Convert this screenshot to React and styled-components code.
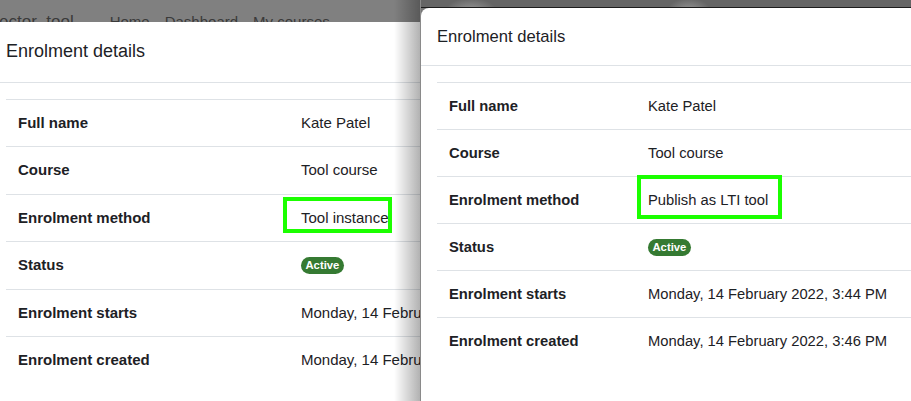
import React from "react";
import styled, { createGlobalStyle } from "styled-components";

const Global = createGlobalStyle`
  html, body { margin: 0; padding: 0; background: #808080; }
  body { font-family: "Liberation Sans", Arial, Helvetica, sans-serif; color: #1d2125; }
  * { box-sizing: border-box; }
`;

const Stage = styled.div`
  position: relative;
  width: 911px;
  height: 401px;
  overflow: hidden;
  background: #808080;
`;

const LeftShot = styled.div`
  position: relative;
  display: flex;
  flex-direction: column;
  height: 100%;
`;

const NavStrip = styled.div`
  flex: none;
  height: 22px;
  overflow: hidden;
  display: flex;
  align-items: flex-start;
  gap: 15px;
  padding-top: 13px;
  color: #3a3a3a;
  font-size: 15px;
  line-height: 17px;
  white-space: nowrap;
`;

const Brand = styled.span`
  font-size: 17px;
  margin-left: -1px;
  margin-right: 21px;
`;

const NavLink = styled.span`
  padding-top: 0;
`;

const Modal = styled.div`
  flex: 1;
  display: flex;
  flex-direction: column;
  background: #fff;
  border-top-left-radius: ${(p) => (p.$rounded ? "8px" : "0")};
`;

const ModalHeader = styled.div`
  flex: none;
  height: ${(p) => p.$height}px;
  display: flex;
  align-items: center;
  padding-left: ${(p) => p.$inset}px;
  border-bottom: 1px solid #dee2e6;
`;

const Title = styled.h5`
  margin: 0;
  font-size: ${(p) => p.$size}px;
  font-weight: 400;
  line-height: 1.2;
  color: #1d2125;
`;

const ModalBody = styled.div`
  padding: 16px 0 0 ${(p) => p.$inset}px;
`;

const DetailRow = styled.div`
  display: grid;
  grid-template-columns: ${(p) => p.$labelWidth}px 1fr;
  border-top: 1px solid #dee2e6;
  font-size: ${(p) => p.$size}px;
  line-height: ${(p) => p.$lh}px;
`;

const Label = styled.div`
  padding: 12px;
  font-weight: 700;
  white-space: nowrap;
`;

const Value = styled.div`
  padding: 12px;
  white-space: nowrap;
`;

const Badge = styled.span`
  display: inline-block;
  background: #357a32;
  color: #fff;
  font-size: 11.25px;
  font-weight: 700;
  line-height: 1;
  padding: 2.8px 4.5px;
  border-radius: 10rem;
  vertical-align: 1px;
`;

const Highlight = styled.div`
  position: absolute;
  left: ${(p) => p.$x}px;
  top: ${(p) => p.$y}px;
  width: ${(p) => p.$w}px;
  height: ${(p) => p.$h}px;
  border: 4px solid #1bff00;
  pointer-events: none;
`;

const RightShot = styled.div`
  position: absolute;
  top: 0;
  left: 420px;
  width: 491px;
  height: 401px;
  display: flex;
  flex-direction: column;
  background: #777;
  border-left: 1px solid #8a8a8a;

  &::before {
    content: "";
    position: absolute;
    top: 0;
    bottom: 0;
    left: -27px;
    width: 26px;
    background: linear-gradient(to right, rgba(0, 0, 0, 0), rgba(0, 0, 0, 0.3));
  }
`;

const TopStrip = styled.div`
  flex: none;
  height: 8px;
  background:
    radial-gradient(ellipse 26px 14px at 50px 12px, #9a9a9a 0%, rgba(154,154,154,0) 100%),
    radial-gradient(ellipse 22px 14px at 268px 12px, #9a9a9a 0%, rgba(154,154,154,0) 100%),
    #656565;
  border-bottom: 1px solid #1c1c1c;
`;

const rows = (method) => [
  ["Full name", "Kate Patel"],
  ["Course", "Tool course"],
  ["Enrolment method", method],
  ["Status", <Badge key="b">Active</Badge>],
  ["Enrolment starts", "Monday, 14 February 2022, 3:44 PM"],
  ["Enrolment created", "Monday, 14 February 2022, 3:46 PM"],
];

function Details({ method, labelWidth, size, lh }) {
  return (
    <div>
      {rows(method).map(([k, v]) => (
        <DetailRow key={k} $labelWidth={labelWidth} $size={size} $lh={lh}>
          <Label>{k}</Label>
          <Value>{v}</Value>
        </DetailRow>
      ))}
    </div>
  );
}

export default function App() {
  return (
    <>
      <Global />
      <Stage>
        <LeftShot>
          <NavStrip>
            <Brand>ector_tool</Brand>
            <NavLink>Home</NavLink>
            <NavLink>Dashboard</NavLink>
            <NavLink>My courses</NavLink>
          </NavStrip>
          <Modal>
            <ModalHeader $height={61} $inset={6}>
              <Title $size={18}>Enrolment details</Title>
            </ModalHeader>
            <ModalBody $inset={6}>
              <Details method="Tool instance" labelWidth={283} size={15} lh={22.4} />
            </ModalBody>
          </Modal>
          <Highlight $x={283} $y={197} $w={109} $h={36} />
        </LeftShot>
        <RightShot>
          <TopStrip />
          <Modal $rounded>
            <ModalHeader $height={58} $inset={16}>
              <Title $size={16.6}>Enrolment details</Title>
            </ModalHeader>
            <ModalBody $inset={16}>
              <Details method="Publish as LTI tool" labelWidth={199} size={14.75} lh={22} />
            </ModalBody>
          </Modal>
          <Highlight $x={216} $y={175} $w={145} $h={44} />
        </RightShot>
      </Stage>
    </>
  );
}
